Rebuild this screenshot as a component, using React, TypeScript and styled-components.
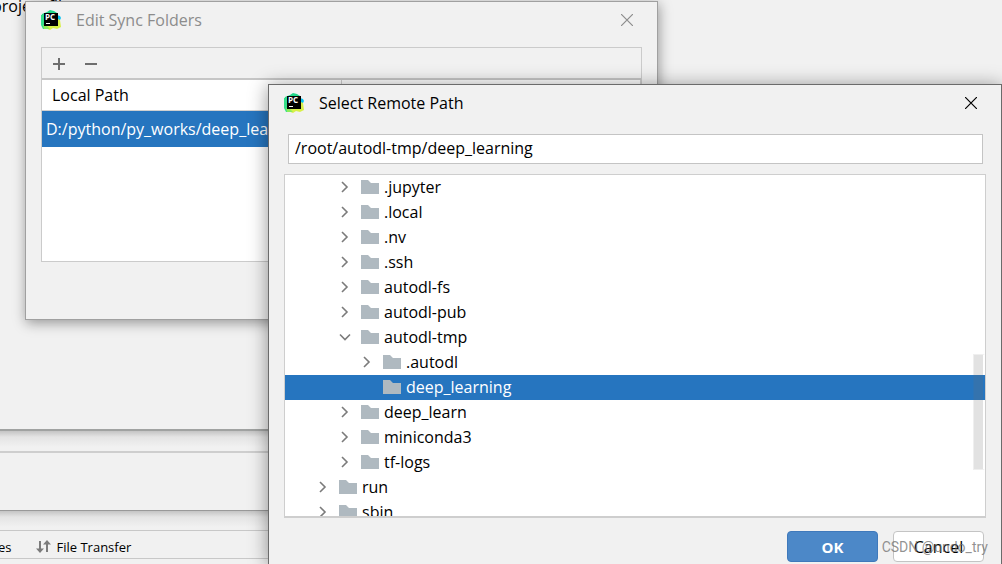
import React from "react";
import styled, { createGlobalStyle, css } from "styled-components";

const GlobalStyle = createGlobalStyle`
  * { box-sizing: border-box; }
  body {
    margin: 0;
    background: #f1f1f1;
    color: #000;
    font-family: "Open Sans", "Noto Sans", sans-serif;
    font-size: 16px;
    line-height: 20px;
    overflow: hidden;
  }
  button, input { font: inherit; color: inherit; }
  svg { display: block; flex: none; }
`;

const Desktop = styled.main`
  position: relative;
  display: flex;
  flex-direction: column;
  height: 100vh;
  overflow: hidden;
`;

const SettingsPane = styled.section`
  flex: 1;
  min-height: 0;
  margin: -4px 0 0 -8px;
  border-bottom: 2px solid #a0a2a1;
`;

const StatusArea = styled.section`
  height: 80px;
  padding-top: 20px;
  border-bottom: 1px solid #999;
  background: linear-gradient(#c4c4c4, #e4e4e4 6px, #f1f1f1 16px);
`;

const Divider = styled.hr`
  margin: 0;
  border: 0;
  height: 2px;
  background: #cecece;
`;

const ToolBar = styled.footer`
  height: 53px;
  padding-top: 19px;
  background: linear-gradient(#c4c4c4, #e4e4e4 6px, #f1f1f1 16px);
`;

const ToolTabs = styled.nav`
  display: flex;
  align-items: center;
  gap: 24px;
  height: 29px;
  padding-top: 4px;
  margin-left: -2px;
  border: solid #c8c8c8;
  border-width: 1px 0;
  font-size: 13px;
`;

const ToolTab = styled.button`
  display: flex;
  align-items: center;
  gap: 6px;
  padding: 0;
  border: 0;
  background: none;
`;

const Dialog = styled.section<{ $active?: boolean }>`
  position: absolute;
  display: flex;
  flex-direction: column;
  background: #f1f1f1;
  border: 1px solid ${(p) => (p.$active ? "#6b6b6b" : "#a0a0a0")};
  box-shadow: ${(p) =>
    p.$active ? "0 2px 18px rgba(0,0,0,.42)" : "1px 3px 12px rgba(0,0,0,.38)"};
`;

const SyncDialog = styled(Dialog)`
  left: 25px;
  top: 1px;
  width: 633px;
  padding: 0 15px 57px;
`;

const RemoteDialog = styled(Dialog)`
  left: 268px;
  right: 0;
  top: 84px;
  bottom: 0;
  padding: 0 15px;
  border-bottom: 0;
`;

const TitleBar = styled.header<{ $muted?: boolean; $height: number }>`
  display: flex;
  align-items: center;
  gap: 15px;
  height: ${(p) => p.$height}px;
  padding-right: 1px;
  padding-bottom: ${(p) => p.$height - 36}px;
  color: ${(p) => (p.$muted ? "#8c8c8c" : "#000")};
`;

const Title = styled.h2`
  flex: 1;
  margin: 0;
  font-size: 16px;
  font-weight: 400;
`;

const IconButton = styled.button`
  display: grid;
  place-items: center;
  width: 28px;
  height: 28px;
  padding: 0;
  border: 0;
  background: none;
`;

const FolderPanel = styled.div`
  height: 215px;
  border: 1px solid #cbcbcb;
  background: #fff;
`;

const Actions = styled.div`
  display: flex;
  align-items: center;
  gap: 4px;
  height: 32px;
  padding: 2px 0 0 3px;
  background: #f1f1f1;
  border-bottom: 2px solid #c6c6c6;
`;

const PathTable = styled.table`
  width: 100%;
  table-layout: fixed;
  border-collapse: collapse;
  text-align: left;
`;

const HeadCell = styled.th`
  height: 30px;
  padding: 0 10px;
  border-right: 1px solid #d0d0d0;
  border-bottom: 1px solid #d0d0d0;
  font-weight: 400;
`;

const PathCell = styled.td`
  height: 37px;
  padding: 0 4px;
  background: #2675bf;
  color: #fff;
  white-space: nowrap;
`;

const PathInput = styled.input`
  height: 30px;
  margin: 0 3px 10px 4px;
  padding: 0 6px 2px;
  border: 1px solid #c4c4c4;
  background: #fff;
  outline: 0;
`;

const TreeBox = styled.div`
  position: relative;
  height: 344px;
  overflow: hidden;
  border: 1px solid #cecece;
  border-bottom-width: 2px;
  background: #fff;
`;

const Tree = styled.ul`
  margin: 0;
  padding: 0;
  list-style: none;
`;

const TreeRow = styled.li<{ $depth: number; $selected?: boolean }>`
  display: flex;
  align-items: center;
  height: 25px;
  padding-bottom: 2px;
  padding-left: ${(p) => 32 + p.$depth * 22}px;
  ${(p) =>
    p.$selected &&
    css`
      background: #2675bf;
      color: #fff;
    `}
`;

const Twisty = styled.span`
  width: 22px;
`;

const RowLabel = styled.span`
  margin-left: 5px;
`;

const ScrollThumb = styled.div`
  position: absolute;
  right: 0;
  top: 179px;
  width: 12px;
  height: 116px;
  border: 1px solid rgba(110, 110, 110, 0.1);
  border-right: 2px solid transparent;
  background: rgba(110, 110, 110, 0.2);
  background-clip: padding-box;
`;

const ButtonRow = styled.div`
  display: flex;
  justify-content: flex-end;
  gap: 15px;
  padding: 13px 2px 0;
`;

const DialogButton = styled.button<{ $primary?: boolean }>`
  width: 91px;
  height: 31px;
  padding: 0;
  border: 1px solid ${(p) => (p.$primary ? "#3f79bb" : "#c4c4c4")};
  border-radius: 4px;
  background: ${(p) => (p.$primary ? "#4c88c8" : "#fff")};
  color: ${(p) => (p.$primary ? "#fff" : "#000")};
  font-size: ${(p) => (p.$primary ? 15 : 16)}px;
  font-weight: ${(p) => (p.$primary ? 700 : 400)};
`;

const Watermark = styled.span`
  position: absolute;
  right: 14px;
  bottom: 7px;
  color: rgba(110, 110, 110, 0.75);
  font-family: Roboto, sans-serif;
  font-size: 14px;
  pointer-events: none;
`;

const Logo = () => (
  <svg width="20" height="20" viewBox="0 0 20 20" aria-hidden="true">
    <path d="M1 4 6 2l3-2 4 1 3 2 1 3v9L4 19l-3-3z" fill="#21d789" />
    <path d="M0 5 5 3l2 9-1 7-4 0-2-4z" fill="#35e08a" />
    <path d="m16 5 3 1 1 2-2 4-3-1z" fill="#07c3f2" />
    <path d="m17 9 2 1 1 7-4 2-4-1-3 2-5-2 4-4z" fill="#d8f047" />
    <path d="m2 15 4 1 3 3-6 0z" fill="#8cec5a" />
    <rect x="3" y="3" width="14" height="13" fill="#000" />
    <text x="4" y="10" fill="#fff" fontFamily="Open Sans, sans-serif" fontSize="8" fontWeight="700">PC</text>
    <path d="M5 13.5h4" stroke="#fff" />
  </svg>
);

const Close = () => (
  <svg width="12" height="12" viewBox="0 0 12 12" aria-hidden="true">
    <path d="m0 0 12 12m0-12-12 12" fill="none" stroke="currentColor" strokeWidth="1.2" />
  </svg>
);

const Sign = ({ plus }: { plus?: boolean }) => (
  <svg width="14" height="14" viewBox="0 0 14 14" aria-hidden="true">
    <path d={plus ? "M1 7h12M7 1v12" : "M1 7h12"} stroke="#6e6e6e" strokeWidth="2" />
  </svg>
);

const Chevron = ({ open }: { open?: boolean }) => (
  <svg width="12" height="12" viewBox="0 0 12 12" aria-hidden="true">
    <path
      d={open ? "m1 3.500 5 5 5-5" : "m3 1 5 5-5 5"}
      fill="none"
      stroke="#7b7b7b"
      strokeWidth="1.6"
    />
  </svg>
);

const Folder = () => (
  <svg width="18" height="14" viewBox="0 0 18 14" aria-hidden="true">
    <path d="M0 0h7l3 3h8v11H0z" fill="#afb9c0" />
  </svg>
);

const Transfer = () => (
  <svg width="15" height="13" viewBox="0 0 15 13" aria-hidden="true">
    <path d="M4 1v9M11 12V3" stroke="#7b7b7b" strokeWidth="2" />
    <path d="M0 8.500h8L4 13zM7 4.500h8L11 0z" fill="#7b7b7b" />
  </svg>
);

type Node = { name: string; depth: number; state: "closed" | "open" | "leaf" };

const nodes: Node[] = [
  { name: ".jupyter", depth: 1, state: "closed" },
  { name: ".local", depth: 1, state: "closed" },
  { name: ".nv", depth: 1, state: "closed" },
  { name: ".ssh", depth: 1, state: "closed" },
  { name: "autodl-fs", depth: 1, state: "closed" },
  { name: "autodl-pub", depth: 1, state: "closed" },
  { name: "autodl-tmp", depth: 1, state: "open" },
  { name: ".autodl", depth: 2, state: "closed" },
  { name: "deep_learning", depth: 2, state: "leaf" },
  { name: "deep_learn", depth: 1, state: "closed" },
  { name: "miniconda3", depth: 1, state: "closed" },
  { name: "tf-logs", depth: 1, state: "closed" },
  { name: "run", depth: 0, state: "closed" },
  { name: "sbin", depth: 0, state: "closed" },
];

export default function App() {
  return (
    <>
      <GlobalStyle />
      <Desktop>
        <SettingsPane>project files</SettingsPane>
        <StatusArea>
          <Divider />
        </StatusArea>
        <ToolBar>
          <ToolTabs>
            <ToolTab>es</ToolTab>
            <ToolTab>
              <Transfer />
              File Transfer
            </ToolTab>
          </ToolTabs>
        </ToolBar>

        <SyncDialog role="dialog" aria-labelledby="sync-title">
          <TitleBar $muted $height={45}>
            <Logo />
            <Title id="sync-title">Edit Sync Folders</Title>
            <IconButton aria-label="Close">
              <Close />
            </IconButton>
          </TitleBar>
          <FolderPanel>
            <Actions>
              <IconButton aria-label="Add">
                <Sign plus />
              </IconButton>
              <IconButton aria-label="Remove">
                <Sign />
              </IconButton>
            </Actions>
            <PathTable>
              <thead>
                <tr>
                  <HeadCell scope="col">Local Path</HeadCell>
                  <HeadCell as="td" />
                </tr>
              </thead>
              <tbody>
                <tr>
                  <PathCell colSpan={2}>D:/python/py_works/deep_learning</PathCell>
                </tr>
              </tbody>
            </PathTable>
          </FolderPanel>
        </SyncDialog>

        <RemoteDialog $active role="dialog" aria-labelledby="remote-title">
          <TitleBar $height={49}>
            <Logo />
            <Title id="remote-title">Select Remote Path</Title>
            <IconButton aria-label="Close">
              <Close />
            </IconButton>
          </TitleBar>
          <PathInput aria-label="Remote path" defaultValue="/root/autodl-tmp/deep_learning" />
          <TreeBox>
            <Tree role="tree" aria-label="Remote folders">
              {nodes.map((n) => (
                <TreeRow
                  key={n.name}
                  role="treeitem"
                  aria-selected={n.state === "leaf"}
                  $depth={n.depth}
                  $selected={n.state === "leaf"}
                >
                  <Twisty>{n.state !== "leaf" && <Chevron open={n.state === "open"} />}</Twisty>
                  <Folder />
                  <RowLabel>{n.name}</RowLabel>
                </TreeRow>
              ))}
            </Tree>
            <ScrollThumb />
          </TreeBox>
          <ButtonRow>
            <DialogButton $primary>OK</DialogButton>
            <DialogButton>Cancel</DialogButton>
          </ButtonRow>
        </RemoteDialog>
        <Watermark>CSDN @undo_try</Watermark>
      </Desktop>
    </>
  );
}
